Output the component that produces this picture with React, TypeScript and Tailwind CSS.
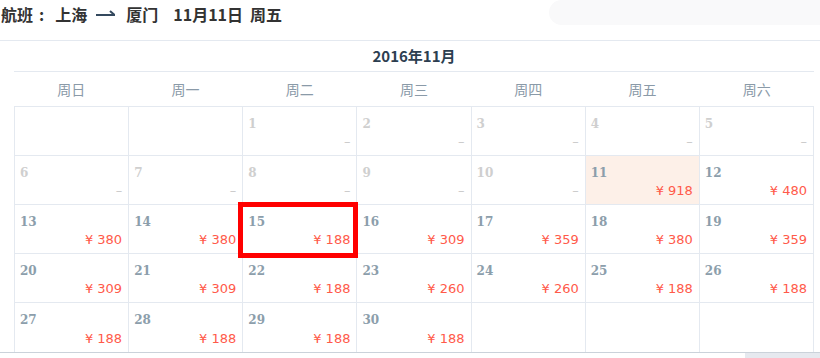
const weekdays = ["周日", "周一", "周二", "周三", "周四", "周五", "周六"];

type Day = { day?: number; price?: number; disabled?: boolean };

const prices: Record<number, number> = {
  11: 918, 12: 480, 13: 380, 14: 380, 15: 188, 16: 309, 17: 359, 18: 380, 19: 359,
  20: 309, 21: 309, 22: 188, 23: 260, 24: 260, 25: 188, 26: 188,
  27: 188, 28: 188, 29: 188, 30: 188,
};

function buildDays(): Day[] {
  const days: Day[] = [{}, {}];
  for (let d = 1; d <= 30; d++) {
    days.push(d < 11 ? { day: d, disabled: true } : { day: d, price: prices[d] });
  }
  while (days.length < 35) days.push({});
  return days;
}

function Arrow() {
  return (
    <svg width="19" height="8" viewBox="0 0 19 8" className="mt-[4px] ml-[9px] mr-[11px]">
      <path d="M0 6 H18.5 L14 2" fill="none" stroke="#34495e" strokeWidth="2" />
    </svg>
  );
}

function Cell({ item, index }: { item: Day; index: number }) {
  const lastRow = index >= 28;
  const selected = item.day === 11;
  const boxed = item.day === 15;
  return (
    <div
      className={`relative h-[49px] border-r border-[#e4e9f0] flex flex-col justify-between pt-[10px] pb-[5px] pl-[5px] pr-[6px] ${
        lastRow ? "" : "border-b"
      } ${selected ? "bg-[#fdf0e8]" : "bg-white"}`}
    >
      {item.day !== undefined && (
        <>
          <div
            className={`text-[12px] leading-[14px] font-bold font-['DejaVu_Serif',serif] ${
              item.disabled ? "text-[#cfcfcf]" : "text-[#8c9eab]"
            }`}
          >
            {item.day}
          </div>
          <div
            className={`text-right text-[13px] leading-[16px] font-['DejaVu_Sans',sans-serif] ${
              item.disabled ? "text-[#c9c9c9]" : "text-[#ff5a4a]"
            }`}
          >
            {item.disabled ? "–" : `¥ ${item.price}`}
          </div>
        </>
      )}
      {boxed && (
        <div className="absolute -left-[5px] -top-[3px] w-[120px] h-[56px] border-[5px] border-[#ff0000] z-10 pointer-events-none" />
      )}
    </div>
  );
}

export default function App() {
  const days = buildDays();
  return (
    <div className="relative w-[820px] h-[358px] overflow-hidden bg-white">
      {/* Title */}
      <div className="flex h-[40px] justify-between">
        <div className="flex items-start pt-[5px] pl-[1px] text-[16px] leading-[18px] font-bold text-[#333] font-['Noto_Sans_CJK_SC',sans-serif]">
          <span>航班</span>
          <span className="ml-[6px]">:</span>
          <span className="ml-[11px]">上海</span>
          <Arrow />
          <span>厦门</span>
          <span className="ml-[15px]">11月11日</span>
          <span className="ml-[7px]">周五</span>
        </div>
        <div className="w-[271px] h-[25px] rounded-l-full bg-[#f9f9fa]" />
      </div>

      {/* Calendar */}
      <div className="border-t border-[#e4e9f0]">
        <div className="ml-[14px] w-[800px]">
          <div className="h-[31px] border-b border-[#e4e9f0] flex items-center justify-center text-[15px] font-bold text-[#2c3e50] font-['Noto_Sans_CJK_SC',sans-serif]">
            2016年11月
          </div>
          <div className="grid grid-cols-7 h-[35px] border-b border-[#e4e9f0] items-center">
            {weekdays.map((w) => (
              <div
                key={w}
                className="text-center text-[14px] text-[#8a9aa8] font-['Noto_Sans_CJK_SC',sans-serif]"
              >
                {w}
              </div>
            ))}
          </div>
          <div className="grid grid-cols-7 border-l border-[#e4e9f0]">
            {days.map((item, i) => (
              <Cell key={i} item={item} index={i} />
            ))}
          </div>
        </div>
        <div className="h-[7px] border-t border-[#cbd2da] flex justify-end">
          <div className="w-[75px] h-full bg-[#e6e9ef]" />
        </div>
      </div>
    </div>
  );
}
